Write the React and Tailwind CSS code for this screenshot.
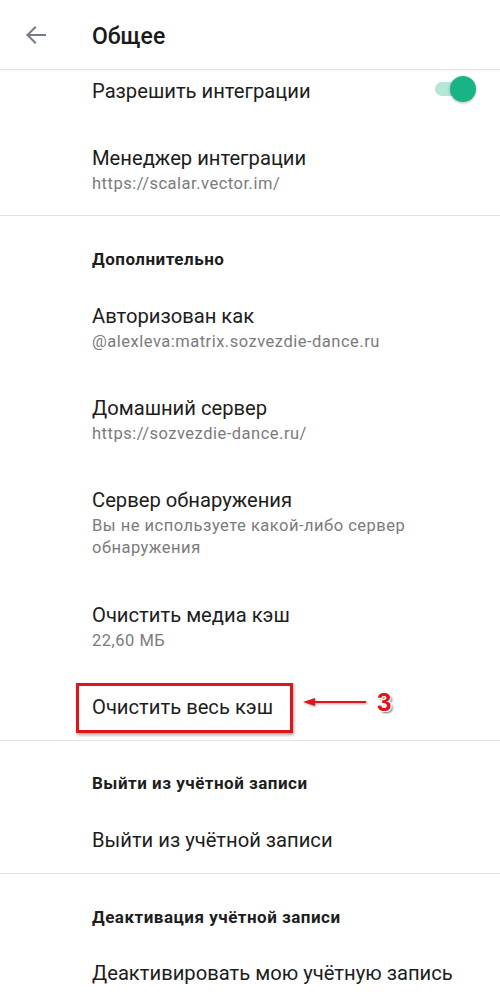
import React from "react";

const font = { fontFamily: "Roboto, 'Noto Sans', sans-serif" };

function Item({ title, sub, pt = "pt-[22px]", pb = "pb-[20px]", children }) {
  return (
    <div className={`relative pl-[92px] pr-6 ${pt} ${pb}`}>
      <div className="text-[20.2px] leading-[26px] text-[#1d1d1d]">{title}</div>
      {sub && (
        <div className="mt-[2px] text-[16.5px] leading-[22px] tracking-[0.5px] text-[#7b7b7b]">{sub}</div>
      )}
      {children}
    </div>
  );
}

function Section({ title, pt = "pt-[33px]" }) {
  return (
    <div className={`pl-[92px] ${pt} pb-[12px] text-[17px] leading-[20px] tracking-[0.5px] font-bold text-[#1d1d1d]`}>
      {title}
    </div>
  );
}

function Divider() {
  return <div className="h-px bg-[#e3e3e3]" />;
}

export default function App() {
  return (
    <div className="w-[500px] h-[1000px] bg-white overflow-hidden" style={font}>
      {/* toolbar */}
      <div className="h-[70px] flex items-center border-b border-[#e4e4e4] shadow-[0_1px_2px_rgba(0,0,0,0.05)]">
        <div className="w-[92px] flex items-center pl-[24px]">
          <svg width="24" height="24" viewBox="0 0 24 24" fill="none">
            <path
              d="M21 12H3.5M11 4.5L3.5 12L11 19.5"
              stroke="#737b85"
              strokeWidth="2"
              strokeLinecap="square"
            />
          </svg>
        </div>
        <div className="text-[23px] font-medium text-[#1a1a1a] leading-none pt-[3px]">Общее</div>
      </div>

      <div className="relative pl-[92px] pr-6 pt-[8px] pb-[19px] flex items-center">
        <div className="text-[20.2px] leading-[26px] text-[#1d1d1d]">Разрешить интеграции</div>
        {/* switch */}
        <div className="absolute left-[435px] top-[6px] w-[36px] h-[26px] flex items-center">
          <div className="w-[34px] h-[14px] rounded-full bg-[#b5e7d7]" />
          <div className="absolute left-[15px] top-0 w-[26px] h-[26px] rounded-full bg-[#18b486] shadow-[0_1px_3px_rgba(0,0,0,0.3)]" />
        </div>
      </div>

      <Item title="Менеджер интеграции" sub="https://scalar.vector.im/" />
      <Divider />

      <Section title="Дополнительно" />
      <Item title="Авторизован как" sub="@alexleva:matrix.sozvezdie-dance.ru" />
      <Item title="Домашний сервер" sub="https://sozvezdie-dance.ru/" />
      <Item
        title="Сервер обнаружения"
        pb="pb-[21px]"
        sub={
          <>
            Вы не используете какой-либо сервер
            <br />
            обнаружения
          </>
        }
      />
      <Item title="Очистить медиа кэш" sub="22,60 МБ" />
      <Item title="Очистить весь кэш" pb="pb-[20px]">
        {/* highlight frame */}
        <div className="absolute left-[76px] top-[11px] w-[217px] h-[50px] border-[3px] border-[#e1141c] shadow-[1px_2px_3px_rgba(0,0,0,0.35)]" />
        {/* pointer arrow */}
        <svg
          className="absolute left-[299px] top-[19px]"
          width="72"
          height="22"
          viewBox="0 0 72 22"
        >
          <g style={{ filter: "drop-shadow(1px 1px 1px rgba(0,0,0,0.35))" }}>
            <path d="M14 11H67" stroke="#e1141c" strokeWidth="2" />
            <path d="M4 11L16 7V15Z" fill="#e1141c" />
          </g>
        </svg>
        <div
          className="absolute left-[377px] top-[17px] text-[26px] font-bold text-[#e1141c] leading-none"
          style={{
            fontFamily: "'Liberation Sans', sans-serif",
            textShadow:
              "1px 0 0 #fff,-1px 0 0 #fff,0 1px 0 #fff,0 -1px 0 #fff,1px 1px 0 #fff,-1px -1px 0 #fff,1px -1px 0 #fff,-1px 1px 0 #fff,2px 2px 2px rgba(0,0,0,0.55)",
          }}
        >
          3
        </div>
      </Item>
      <Divider />

      <Section title="Выйти из учётной записи" pt="pt-[32px]" />
      <Item title="Выйти из учётной записи" pt="pt-[22px]" pb="pb-[20px]" />
      <Divider />

      <Section title="Деактивация учётной записи" pt="pt-[33px]" />
      <Item title="Деактивировать мою учётную запись" pt="pt-[21px]" pb="pb-[21px]" />
    </div>
  );
}
